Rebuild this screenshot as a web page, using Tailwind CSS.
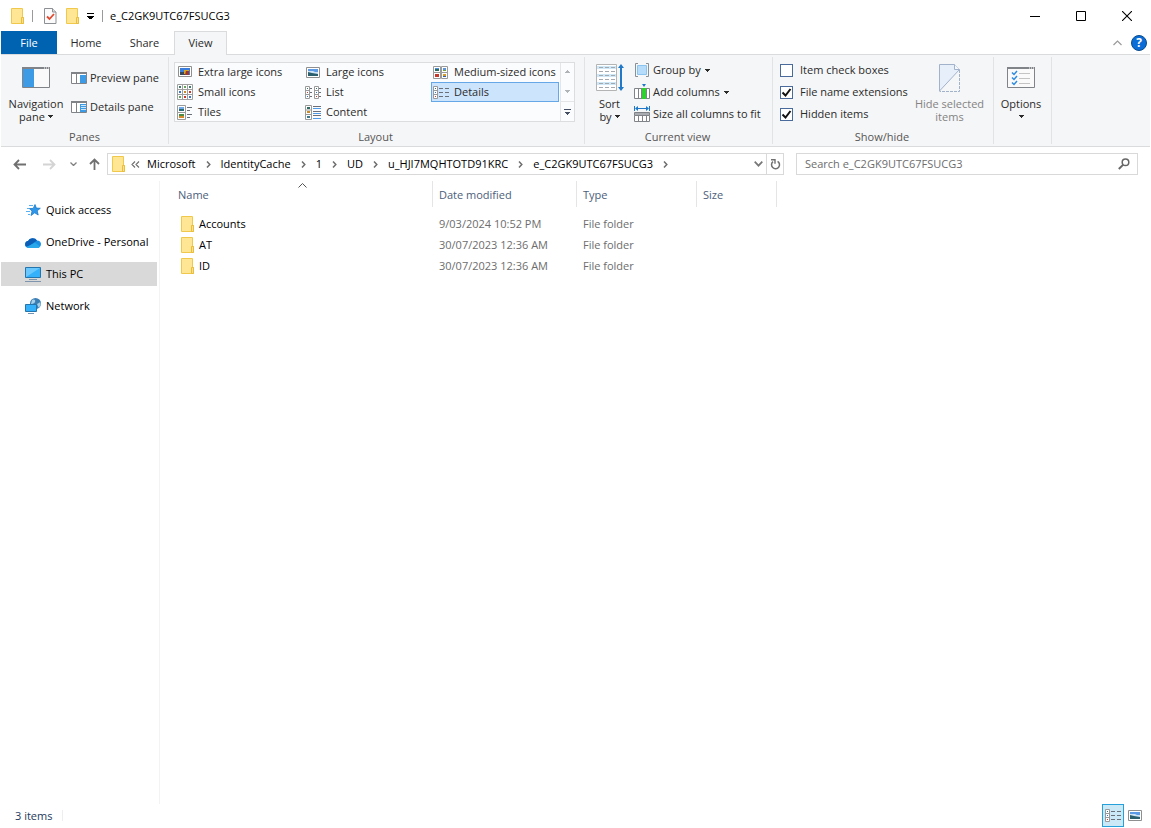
<!DOCTYPE html>
<html lang="en">
<head>
    <meta charset="UTF-8">
    <meta name="viewport" content="width=device-width, initial-scale=1.0">
    <title>e_C2GK9UTC67FSUCG3</title>
    <script src="https://cdn.jsdelivr.net/npm/@tailwindcss/browser@4"></script>
</head>
<body class="bg-white text-black text-[11px] leading-[16px] font-['Open_Sans','Noto_Sans',sans-serif]">
    <!-- Shared icons -->
    <svg class="hidden">
        <symbol id="folder" viewBox="0 0 13 16">
            <path d="M.5.5h11v9h1v6H.5z" fill="#ffe694" stroke="#f0c84c"/>
            <path d="M10.500 9.500h2v6h-2z" fill="#ffe08a" stroke="#e9bd3e"/>
        </symbol>
        <symbol id="caret" viewBox="0 0 5 3"><path d="M0 0h5v1H4v1H3v1H2V2H1V1H0z" fill="currentColor"/></symbol>
        <symbol id="chevron" viewBox="0 0 5 7"><path d="M1 .5l2.800 3L1 6.500" fill="none" stroke="#6d6d6d" stroke-width="1.500"/></symbol>
        <symbol id="thumb" viewBox="0 0 14 11">
            <path d="M.5.5h13v10H.5z" fill="#fff" stroke="#8f8f8f"/>
            <path d="M2 2h10v3H2z" fill="#5d9ae6"/><path d="M2 4h5l2 1h3v2H2z" fill="#cfe3f5"/><path d="M2 5l4 1 6 1v2H2z" fill="#2b5f6e"/>
        </symbol>
        <symbol id="details" viewBox="0 0 16 13">
            <path d="M.5.5h4v12h-4zM.5 4.500h4M.5 8.500h4" fill="#fff" stroke="#9a9a9a"/>
            <path d="M2 2h1v1H2z" fill="#3c7a6b"/><path d="M2 6h1v1H2z" fill="#2f72d6"/><path d="M2 10h1v1H2z" fill="#d83b2b"/>
            <path d="M6 2.500h4M12 2.500h4M6 6.500h4M12 6.500h4M6 10.500h4M12 10.500h4" stroke="#6b7078"/>
        </symbol>
    </svg>

    <div class="flex h-screen flex-col px-px">
        <!-- Title bar -->
        <header class="flex h-[31px] shrink-0 items-center pl-[10px]">
            <svg class="h-4 w-[13px]"><use href="#folder"/></svg>
            <span class="ml-2 h-3 w-px bg-[#9a9a9a]"></span>
            <button class="ml-[11px]" aria-label="Properties">
                <svg class="block h-4 w-[13px]" viewBox="0 0 13 16">
                    <path d="M.5.5h8l3.500 3.500v11.500H.5z" fill="#fbfbfb" stroke="#8c8f93"/>
                    <path d="M8.500.5v3.500h3.500" fill="#ddd" stroke="#8c8f93"/>
                    <path d="M3 8.500l2.500 2.500 4.500-5" fill="none" stroke="#e2492f" stroke-width="1.800"/>
                </svg>
            </button>
            <button class="ml-[9px]" aria-label="New folder"><svg class="block h-4 w-[13px]"><use href="#folder"/></svg></button>
            <button class="ml-2" aria-label="Customize Quick Access Toolbar">
                <svg class="block h-[6px] w-[7px]" viewBox="0 0 7 6" shape-rendering="crispEdges"><path d="M0 0h7v1H0zM0 3h7v1H6v1H5v1H2V5H1V4H0z"/></svg>
            </button>
            <span class="ml-2 h-3 w-px bg-[#9a9a9a]"></span>
            <h1 class="ml-[7px]">e_C2GK9UTC67FSUCG3</h1>
            <div class="ml-auto flex h-full items-center">
                <button class="flex h-full w-[46px] items-center justify-center" aria-label="Minimize">
                    <svg class="size-[10px]" viewBox="0 0 10 10"><path d="M0 5.500h10" stroke="#000"/></svg>
                </button>
                <button class="flex h-full w-[46px] items-center justify-center" aria-label="Maximize">
                    <svg class="size-[10px]" viewBox="0 0 10 10"><path d="M.5.5h9v9h-9z" fill="none" stroke="#000"/></svg>
                </button>
                <button class="flex h-full w-[46px] items-center justify-center" aria-label="Close">
                    <svg class="size-[10px]" viewBox="0 0 10 10"><path d="M0 0l10 10M10 0L0 10" stroke="#000" stroke-width="1.100"/></svg>
                </button>
            </div>
        </header>

        <!-- Ribbon tabs -->
        <nav class="flex h-6 shrink-0 border-b border-[#dadbdc] text-[#2b2b2b]">
            <button class="h-[23px] w-14 bg-[#0063b1] text-white">File</button>
            <button class="h-[23px] w-[58px]">Home</button>
            <button class="h-[23px] w-[59px]">Share</button>
            <button class="h-6 w-[53px] border border-b-0 border-[#dadbdc] bg-[#f5f6f7] pb-[2px]">View</button>
            <div class="ml-auto flex items-center gap-[9px] pr-[3px]">
                <button aria-label="Minimize the Ribbon">
                    <svg class="block h-[6px] w-[9px]" viewBox="0 0 9 6"><path d="M.5 5l4-4 4 4" fill="none" stroke="#9a9a9a" stroke-width="1.200"/></svg>
                </button>
                <button class="flex size-4 items-center justify-center rounded-full border border-[#0a4c8a] bg-[#0a6cd6] text-[12px] leading-none font-bold text-white" aria-label="Help">?</button>
            </div>
        </nav>

        <!-- Ribbon -->
        <section class="flex h-[92px] shrink-0 border-b border-[#dadbdc] bg-[#f5f6f7] pt-[2px] pb-[2px] leading-[13px] text-[#2b2b2b]">
            <!-- Panes -->
            <div class="flex w-[168px] flex-col border-r border-[#e2e3e4]">
                <div class="flex flex-1">
                    <button class="flex w-[70px] shrink-0 flex-col items-center pt-[10px]">
                        <svg class="h-[21px] w-7 shrink-0" viewBox="0 0 28 21">
                            <path d="M.5.5h27v20H.5z" fill="#fafafa" stroke="#808488"/>
                            <path d="M0 0h28v2H0z" fill="#808488"/><path d="M22 .5h1v1h-1zM24 .5h1v1h-1zM26 .5h1v1h-1z" fill="#fff"/>
                            <path d="M1 2h11v18H1z" fill="#3d9be5"/>
                        </svg>
                        <span class="mt-[9px] whitespace-nowrap">Navigation</span>
                        <span class="flex items-center gap-[3px]">pane <svg class="h-[3px] w-[5px]"><use href="#caret"/></svg></span>
                    </button>
                    <div class="flex flex-col pt-[6px]">
                        <button class="flex h-[29px] items-center gap-[3px] whitespace-nowrap">
                            <svg class="h-3 w-4" viewBox="0 0 16 12">
                                <path d="M.5.5h15v11H.5z" fill="#fff" stroke="#808488"/><path d="M0 0h16v2H0zM5 2h1v10H5z" fill="#808488"/>
                                <path d="M9 3h6v8H9z" fill="#3d9be5"/>
                            </svg>Preview pane
                        </button>
                        <button class="flex h-[29px] items-center gap-[3px] whitespace-nowrap">
                            <svg class="h-3 w-4" viewBox="0 0 16 12">
                                <path d="M.5.5h15v11H.5z" fill="#fff" stroke="#808488"/><path d="M0 0h16v2H0zM5 2h1v10H5z" fill="#808488"/>
                                <path d="M9 3h6v8H9z" fill="#3d9be5"/><path d="M10 4.500h5M10 6.500h5M10 8.500h5" stroke="#cfe6fa"/>
                            </svg>Details pane
                        </button>
                    </div>
                </div>
                <div class="pb-[1px] text-center text-[#555]">Panes</div>
            </div>

            <!-- Layout -->
            <div class="flex w-[416px] flex-col border-r border-[#e2e3e4] pt-[5px]">
                <div class="ml-[5px] flex h-[60px] w-[401px] bg-[#fbfcfd] leading-[12px] outline -outline-offset-1 outline-[#dcdddf]">
                    <div class="ml-px grid w-[384px] grid-cols-3 grid-rows-3">
                        <button class="flex items-center gap-[5px] pl-[2px] whitespace-nowrap">
                            <svg class="h-3 w-4" viewBox="0 0 16 12"><path d="M1.500.5h13v10h-13z" fill="#fff" stroke="#8f8f8f"/><path d="M3 2h10v7H3z" fill="#3b7ddd"/><path d="M3 6h5v3H3z" fill="#39495a"/><path d="M7 4h5v4H7z" fill="#d9a520"/><path d="M9 5h3v4H8z" fill="#a3342a"/></svg>
                            Extra large icons
                        </button>
                        <button class="flex items-center gap-[5px] pl-[2px] whitespace-nowrap">
                            <svg class="h-[11px] w-4"><use href="#thumb"/></svg>
                            Large icons
                        </button>
                        <button class="flex items-center gap-[5px] pl-[2px] whitespace-nowrap">
                            <svg class="h-[13px] w-4" viewBox="0 0 16 13"><path d="M.5.5h7v6h-7zM8.500.5h6v6h-6zM.5 6.500h7v6h-7zM8.500 6.500h6v6h-6z" fill="#fff" stroke="#9a9a9a"/><path d="M2 2h4v1H2z" fill="#4a8fe0"/><path d="M2 3h4v2H2z" fill="#2d6b62"/><path d="M10 2h3v2h-3z" fill="#5a95dc"/><path d="M10 4h3v1h-3z" fill="#7aa63a"/><path d="M2 8h4v3H2z" fill="#c8382a"/><path d="M10 8h3v2h-3z" fill="#d79b2a"/><path d="M10 10h3v1h-3z" fill="#2f5fb0"/></svg>
                            Medium-sized icons
                        </button>
                        <button class="flex items-center gap-[5px] pl-[2px] whitespace-nowrap">
                            <svg class="size-4" viewBox="0 0 16 16"><path d="M.5.5h15v15H.5zM5.500 0v16M10.500 0v16M0 5.500h16M0 10.500h16" fill="#fff" stroke="#a0a0a0"/><path d="M2 2h2v2H2zM12 2h2v2h-2z" fill="#3c7a6b"/><path d="M7 2h2v2H7zM2 12h2v2H2z" fill="#63a35c"/><path d="M2 7h2v2H2zM12 12h2v2h-2z" fill="#3a74c8"/><path d="M7 7h2v2H7z" fill="#c98a2a"/><path d="M12 7h2v2h-2zM7 12h2v2H7z" fill="#c8382a"/></svg>
                            Small icons
                        </button>
                        <button class="flex items-center gap-[5px] pl-[2px] whitespace-nowrap">
                            <svg class="h-[13px] w-4" viewBox="0 0 16 13"><path d="M.5.5h4v12h-4zM.5 4.500h4M.5 8.500h4M9.500.5h4v12h-4zM9.500 4.500h4M9.500 8.500h4" fill="#fff" stroke="#9a9a9a"/><path d="M5 2.500h2M5 6.500h2M5 10.500h2M14 2.500h2M14 6.500h2M14 10.500h2" stroke="#6b7078"/><path d="M2 2h1v1H2zM11 2h1v1h-1z" fill="#3c7a6b"/><path d="M2 6h1v1H2zM11 10h1v1h-1z" fill="#d83b2b"/><path d="M2 10h1v1H2zM11 6h1v1h-1z" fill="#2f72d6"/></svg>
                            List
                        </button>
                        <button class="flex items-center gap-[5px] border border-[#66a7e8] bg-[#cce4fc] pl-px whitespace-nowrap">
                            <svg class="h-[13px] w-4"><use href="#details"/></svg>
                            Details
                        </button>
                        <button class="flex items-center gap-[5px] pl-[2px] whitespace-nowrap">
                            <svg class="h-[15px] w-4" viewBox="0 0 16 15"><path d="M.5.5h8v7h-8zM.5 7.500h8v7h-8z" fill="#fff" stroke="#9a9a9a"/><path d="M2 2h5v2H2z" fill="#6fa8ea"/><path d="M2 4h5v2H2z" fill="#2d6b72"/><path d="M2 9h5v2H2z" fill="#4c8b45"/><path d="M2 11h5v2H2z" fill="#d6882a"/><path d="M10 2.500h5M10 5.500h3M10 9.500h5M10 12.500h3" stroke="#6b7078"/></svg>
                            Tiles
                        </button>
                        <button class="flex items-center gap-[5px] pl-[2px] whitespace-nowrap">
                            <svg class="h-[15px] w-4" viewBox="0 0 16 15"><path d="M.5.5h6v14h-6zM.5 5h6M.5 9.500h6" fill="#fff" stroke="#9a9a9a"/><path d="M2 2h3v2H2z" fill="#2d6b62"/><path d="M2 6h3v2H2z" fill="#c98a2a"/><path d="M2 11h3v2H2z" fill="#3c7a8b"/><path d="M8 1.500h8M8 6.500h8M8 10.500h8" stroke="#6b7078"/><path d="M8 3.500h8M8 8.500h8M8 13.500h8" stroke="#4f9bea"/></svg>
                            Content
                        </button>
                    </div>
                    <div class="ml-px flex flex-1 flex-col border-l border-[#e4e5e7] pr-px">
                        <button class="flex flex-1 items-center justify-center text-[#b0b4b9]" aria-label="Row up"><svg class="h-[3px] w-[5px] rotate-180"><use href="#caret"/></svg></button>
                        <button class="flex flex-1 items-center justify-center text-[#b0b4b9]" aria-label="Row down"><svg class="h-[3px] w-[5px]"><use href="#caret"/></svg></button>
                        <button class="flex flex-1 items-center justify-center border-t border-[#e4e5e7]" aria-label="More layouts">
                            <svg class="h-[6px] w-[7px]" viewBox="0 0 7 6" shape-rendering="crispEdges"><path d="M0 0h7v1H0zM1 3h5v1H5v1H4v1H3V5H2V4H1z" fill="#444f66"/></svg>
                        </button>
                    </div>
                </div>
                <div class="mt-auto pr-[2px] pb-[1px] text-center text-[#555]">Layout</div>
            </div>

            <!-- Current view -->
            <div class="flex w-[188px] flex-col border-r border-[#e2e3e4]">
                <div class="flex flex-1">
                    <button class="flex w-[49px] flex-col items-center pt-[7px]">
                        <svg class="h-7 w-7 shrink-0" viewBox="0 0 28 28">
                            <path d="M.5.5h20v26H.5z" fill="#fff" stroke="#b4b4b4"/>
                            <path d="M1 2h19v3H1zM1 10h19v3H1zM1 18h19v3H1z" fill="#cfe8f7"/>
                            <path d="M3 3.500h16M3 7.500h16M3 11.500h16M3 15.500h16M3 19.500h16M3 23.500h16" stroke="#a3a9ae" stroke-dasharray="4 2"/>
                            <path d="M25 2v23" stroke="#1f78c8" stroke-width="2"/><path d="M22 4l3-4 3 4zM22 23h6l-3 4z" fill="#1f78c8"/>
                        </svg>
                        <span class="mt-[5px]">Sort</span>
                        <span class="flex items-center gap-[3px]">by <svg class="h-[3px] w-[5px]"><use href="#caret"/></svg></span>
                    </button>
                    <div class="flex flex-col pt-[2px] leading-[12px]">
                        <button class="flex h-[22px] items-center gap-[3px] whitespace-nowrap">
                            <svg class="size-4" viewBox="0 0 16 16"><path d="M4 1.500H1.500v13H4M12 1.500h2.500v13H12" fill="none" stroke="#8a8f94"/><path d="M3.500 3.500h9v9h-9z" fill="#b5dcfa" stroke="#8cc4f0"/></svg>
                            Group by <svg class="ml-px h-[3px] w-[5px]"><use href="#caret"/></svg>
                        </button>
                        <button class="flex h-[22px] items-center gap-[3px] whitespace-nowrap">
                            <svg class="size-4" viewBox="0 0 16 16"><path d="M.5 4.500h15v10H.5zM4.500 4v11" fill="#fff" stroke="#808488"/><path d="M8 4h4v11H8z" fill="#2fd12f"/><path d="M7.500 4v11M12.500 4v11" stroke="#808488"/><path d="M8 0h4l-2 3z" fill="#1f78c8"/></svg>
                            Add columns <svg class="ml-px h-[3px] w-[5px]"><use href="#caret"/></svg>
                        </button>
                        <button class="flex h-[22px] items-center gap-[3px] whitespace-nowrap">
                            <svg class="size-4" viewBox="0 0 16 16"><path d="M.5 0v5M15.500 0v5M2 2.500h12" stroke="#1f78c8"/><path d="M1 2.500L4 0v5zM15 2.500L12 0v5z" fill="#1f78c8"/><path d="M.5 6.500h15v3H.5z" fill="#a9adb1" stroke="#808488"/><path d="M.5 9.500h15v6H.5zM4.500 9v7M8.500 9v7M12.500 9v7" fill="#fff" stroke="#808488"/></svg>
                            Size all columns to fit
                        </button>
                    </div>
                </div>
                <div class="pr-[2px] pb-[1px] text-center text-[#555]">Current view</div>
            </div>

            <!-- Show/hide -->
            <div class="flex w-[221px] flex-col border-r border-[#e2e3e4]">
                <div class="flex flex-1">
                    <div class="flex w-[137px] flex-col pt-[2px] pl-[7px] leading-[12px]">
                        <label class="flex h-[22px] items-center gap-[7px] whitespace-nowrap">
                            <span class="grid size-[13px] *:col-start-1 *:row-start-1">
                                <input type="checkbox" class="peer size-[13px] appearance-none border border-[#4a6a9b] bg-white">
                                <svg class="hidden size-[13px] peer-checked:block" viewBox="0 0 13 13"><path d="M2.500 6.500l3 3 5-6.500" fill="none" stroke="#111" stroke-width="2"/></svg>
                            </span>
                            Item check boxes
                        </label>
                        <label class="flex h-[22px] items-center gap-[7px] whitespace-nowrap">
                            <span class="grid size-[13px] *:col-start-1 *:row-start-1">
                                <input type="checkbox" checked class="peer size-[13px] appearance-none border border-[#4a6a9b] bg-white">
                                <svg class="hidden size-[13px] peer-checked:block" viewBox="0 0 13 13"><path d="M2.500 6.500l3 3 5-6.500" fill="none" stroke="#111" stroke-width="2"/></svg>
                            </span>
                            File name extensions
                        </label>
                        <label class="flex h-[22px] items-center gap-[7px] whitespace-nowrap">
                            <span class="grid size-[13px] *:col-start-1 *:row-start-1">
                                <input type="checkbox" checked class="peer size-[13px] appearance-none border border-[#4a6a9b] bg-white">
                                <svg class="hidden size-[13px] peer-checked:block" viewBox="0 0 13 13"><path d="M2.500 6.500l3 3 5-6.500" fill="none" stroke="#111" stroke-width="2"/></svg>
                            </span>
                            Hidden items
                        </label>
                    </div>
                    <button class="flex flex-1 flex-col items-center pt-[7px] pr-1 text-[#838383]" disabled>
                        <svg class="h-7 w-[21px] shrink-0" viewBox="0 0 21 28">
                            <path d="M.5.5h15l5 5L.5 27z" fill="#e6effa" stroke="#a3b2cb"/><path d="M15.500.5v5h5" fill="#f5f9fd" stroke="#a3b2cb"/>
                            <path d="M20.500 6v21.500H.5" fill="none" stroke="#a3b2cb" stroke-dasharray="3 1"/>
                        </svg>
                        <span class="mt-[5px] whitespace-nowrap">Hide selected</span>
                        <span>items</span>
                    </button>
                </div>
                <div class="pr-[2px] pb-[1px] text-center text-[#555]">Show/hide</div>
            </div>

            <!-- Options -->
            <div class="w-[58px] border-r border-[#e2e3e4]">
                <button class="flex w-full flex-col items-center pt-[10px] pr-[3px]">
                    <svg class="h-[21px] w-7" viewBox="0 0 28 21">
                        <path d="M.5.5h27v20H.5z" fill="#fafafa" stroke="#808488"/><path d="M0 0h28v2H0z" fill="#808488"/><path d="M22 .5h1v1h-1zM24 .5h1v1h-1zM26 .5h1v1h-1z" fill="#fff"/>
                        <path d="M5 5.500l2 2 3-3.500M5 10.500l2 2 3-3.500M5 15.500l2 2 3-3.500" fill="none" stroke="#2e8be0" stroke-width="1.500"/>
                        <path d="M12 6.500h11M12 11.500h11M12 16.500h11" stroke="#c4c4c4"/>
                    </svg>
                    <span class="mt-[9px]">Options</span>
                    <svg class="mt-[5px] h-[3px] w-[5px]"><use href="#caret"/></svg>
                </button>
            </div>
        </section>

        <!-- Address bar -->
        <div class="flex h-[34px] shrink-0 items-center pr-3">
            <div class="flex w-[106px] items-center pl-3">
                <button aria-label="Back"><svg class="block h-[11px] w-[13px]" viewBox="0 0 13 11"><path d="M13 5.500H1.500M6 1L1.500 5.500 6 10" fill="none" stroke="#707070" stroke-width="1.800"/></svg></button>
                <button class="ml-[17px]" aria-label="Forward" disabled><svg class="block h-[11px] w-[13px]" viewBox="0 0 13 11"><path d="M0 5.500h11.500M7 1l4.500 4.500L7 10" fill="none" stroke="#d4d4d4" stroke-width="1.800"/></svg></button>
                <button class="ml-[14px]" aria-label="Recent locations"><svg class="block h-1 w-[7px]" viewBox="0 0 7 4"><path d="M.5.5l3 3 3-3" fill="none" stroke="#808080" stroke-width="1.300"/></svg></button>
                <button class="ml-3" aria-label="Up"><svg class="block h-3 w-[11px]" viewBox="0 0 11 12"><path d="M5.500 12V1.500M1 6l4.500-4.500L10 6" fill="none" stroke="#707070" stroke-width="1.800"/></svg></button>
            </div>
            <div class="flex h-[22px] flex-1 items-center border border-[#d9d9d9] pl-1">
                <svg class="h-4 w-[13px] shrink-0"><use href="#folder"/></svg>
                <nav class="ml-[6px] flex items-center whitespace-nowrap">
                    <svg class="h-[7px] w-[9px]" viewBox="0 0 9 7"><path d="M4 .5L1 3.500l3 3M8 .5L5 3.500l3 3" fill="none" stroke="#6d6d6d" stroke-width="1.100"/></svg>
                    <a href="#" class="ml-[7px]">Microsoft</a>
                    <svg class="mx-[10px] h-[7px] w-[5px]"><use href="#chevron"/></svg>
                    <a href="#">IdentityCache</a>
                    <svg class="mx-[10px] h-[7px] w-[5px]"><use href="#chevron"/></svg>
                    <a href="#">1</a>
                    <svg class="mx-[10px] h-[7px] w-[5px]"><use href="#chevron"/></svg>
                    <a href="#">UD</a>
                    <svg class="mx-[10px] h-[7px] w-[5px]"><use href="#chevron"/></svg>
                    <a href="#">u_HJI7MQHTOTD91KRC</a>
                    <svg class="mx-[10px] h-[7px] w-[5px]"><use href="#chevron"/></svg>
                    <a href="#">e_C2GK9UTC67FSUCG3</a>
                    <svg class="mx-[10px] h-[7px] w-[5px]"><use href="#chevron"/></svg>
                </nav>
                <button class="mr-[3px] ml-auto" aria-label="Previous locations"><svg class="block h-[6px] w-[9px]" viewBox="0 0 9 6"><path d="M.7.7l3.800 4L8.300.7" fill="none" stroke="#777" stroke-width="1.700"/></svg></button>
                <button class="flex h-full w-[17px] items-center justify-center border-l border-[#d9d9d9]" aria-label="Refresh">
                    <svg class="size-[11px]" viewBox="0 0 11 11"><path d="M3 2.600A4 4 0 1 0 7.600 2.300" fill="none" stroke="#707070" stroke-width="1.500"/><path d="M1 .7h4v4" fill="none" stroke="#707070" stroke-width="1.400"/></svg>
                </button>
            </div>
            <div class="ml-3 flex h-[22px] w-[342px] items-center border border-[#d9d9d9] pr-[7px] pl-2">
                <label for="search" class="sr-only">Search</label>
                <input id="search" type="text" placeholder="Search e_C2GK9UTC67FSUCG3" class="h-5 min-w-0 flex-1 leading-5 outline-none placeholder:text-[#6d6d6d]">
                <svg class="size-3" viewBox="0 0 12 12"><circle cx="7.500" cy="4.300" r="3.300" fill="none" stroke="#666" stroke-width="1.500"/><path d="M5 6.800L.8 11" stroke="#666" stroke-width="1.900"/></svg>
            </div>
        </div>

        <main class="flex min-h-0 flex-1">
            <!-- Navigation pane -->
            <aside class="flex w-[159px] shrink-0 flex-col gap-2 border-r border-[#f3f3f3] pt-[17px] pr-[2px] whitespace-nowrap">
                <a href="#" class="flex h-6 items-center gap-[5px] pl-6">
                    <svg class="size-4" viewBox="0 0 16 16"><path d="M10 2.500l1.300 3.600 4 .2-3.100 2.500 1 4.200-3.500-2.200-3.700 2.700 1.100-4.500L4.300 6.600l4-.2z" fill="#2f97ea" stroke="#1a78c8" stroke-width=".8"/><path d="M4 3.500h4M2 6.500h2M1 9.500h4M3 12.500h2" stroke="#58b0f2"/></svg>
                    Quick access
                </a>
                <a href="#" class="flex h-6 items-center gap-[5px] pl-6">
                    <svg class="h-[11px] w-4" viewBox="0 0 16 11"><path d="M3 4a5 4.500 0 0 1 9-.5c2.500 0 4 1.700 4 3.500s-1.500 4-3.500 4H4C1.500 11 0 9.500 0 7.500S1.500 4 3 4z" fill="#1a8fe3"/><path d="M3 4a5 4.500 0 0 1 9-.5L5 8.500C3 9 1 9.500.7 9-.5 7 .5 4.300 3 4z" fill="#0c5db5"/><path d="M2 10l8-4.500 5 4c-.6.900-1.500 1.500-2.500 1.500H4c-1 0-1.600-.5-2-1z" fill="#28a8ea"/></svg>
                    OneDrive - Personal
                </a>
                <a href="#" class="flex h-6 items-center gap-[5px] bg-[#d9d9d9] pl-6">
                    <svg class="h-4 w-4" viewBox="0 0 16 16"><path d="M.5 1.500h15v10H.5z" fill="#35b1fb" stroke="#2474ad"/><path d="M1 11L15 2H1z" fill="#6ac8ff"/><path d="M4 13.500h8M0 15.500h16" stroke="#7e96ad"/></svg>
                    This PC
                </a>
                <a href="#" class="flex h-6 items-center gap-[5px] pl-6">
                    <svg class="size-4" viewBox="0 0 16 16"><circle cx="10.500" cy="5.500" r="5.500" fill="#3b7fb5"/><path d="M7 2c2-1.500 4 0 3 2S6 6 6 6zM12 6c2-1 3-2 3.500-1 .3 3-1 4-2 4.500z" fill="#a8d0e8"/><path d="M.5 6.500h11v7H.5z" fill="#35b1fb" stroke="#2474ad"/><path d="M3 15.500h6" stroke="#6f93b3"/></svg>
                    Network
                </a>
            </aside>

            <!-- File list -->
            <section class="min-w-0 flex-1">
                <table class="w-[617px] table-fixed border-separate border-spacing-0 text-left text-[#6d6d6d]">
                    <thead>
                        <tr class="h-[26px] text-[#4c607a]">
                            <th class="relative w-[273px] border-r border-[#e5e5e5] pt-[2px] pl-[18px] font-normal">
                                Name
                                <svg class="absolute top-[2px] left-[138px] h-[5px] w-[9px]" viewBox="0 0 9 5"><path d="M.5 4.500l4-4 4 4" fill="none" stroke="#555"/></svg>
                            </th>
                            <th class="w-[144px] border-r border-[#e5e5e5] pt-[2px] pl-[6px] font-normal">Date modified</th>
                            <th class="w-[120px] border-r border-[#e5e5e5] pt-[2px] pl-[6px] font-normal">Type</th>
                            <th class="w-[80px] border-r border-[#e5e5e5] pt-[2px] pl-[6px] font-normal">Size</th>
                        </tr>
                        <tr class="h-[6px]"></tr>
                    </thead>
                    <tbody>
                        <tr class="h-[21px]">
                            <td><div class="flex items-center gap-[5px] pl-[21px] text-black"><svg class="h-4 w-[13px]"><use href="#folder"/></svg>Accounts</div></td>
                            <td class="pl-[6px]">9/03/2024 10:52 PM</td>
                            <td class="pl-[6px]">File folder</td>
                            <td></td>
                        </tr>
                        <tr class="h-[21px]">
                            <td><div class="flex items-center gap-[5px] pl-[21px] text-black"><svg class="h-4 w-[13px]"><use href="#folder"/></svg>AT</div></td>
                            <td class="pl-[6px]">30/07/2023 12:36 AM</td>
                            <td class="pl-[6px]">File folder</td>
                            <td></td>
                        </tr>
                        <tr class="h-[21px]">
                            <td><div class="flex items-center gap-[5px] pl-[21px] text-black"><svg class="h-4 w-[13px]"><use href="#folder"/></svg>ID</div></td>
                            <td class="pl-[6px]">30/07/2023 12:36 AM</td>
                            <td class="pl-[6px]">File folder</td>
                            <td></td>
                        </tr>
                    </tbody>
                </table>
            </section>
        </main>

        <!-- Status bar -->
        <footer class="flex h-6 shrink-0 items-center pr-[8px] pb-[1px] pl-[14px] text-[#1e395b]">
            <span class="h-[11px] border-r border-[#eee] pr-[10px] leading-[11px]">3 items</span>
            <button class="ml-auto flex h-[23px] w-[22px] items-center justify-center border border-[#26a0da] bg-[#cbe8f6]" aria-label="Details view"><svg class="h-[13px] w-4"><use href="#details"/></svg></button>
            <button class="ml-1" aria-label="Large thumbnails view"><svg class="block h-[11px] w-[14px]"><use href="#thumb"/></svg></button>
        </footer>
    </div>
</body>
</html>
